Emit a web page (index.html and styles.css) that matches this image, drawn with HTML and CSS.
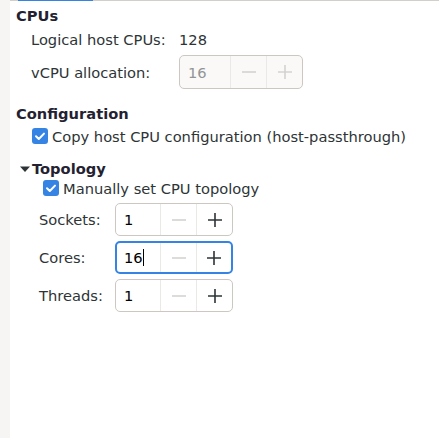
FILE: index.html
```html
<!DOCTYPE html>
<html>
<head>
<meta charset="utf-8">
<link rel="stylesheet" href="styles.css">
</head>
<body>
<div class="side"></div>
<div class="main">
  <div class="topline"><div class="indicator"></div></div>
  <div class="content">
    <div class="heading h-cpus">CPUs</div>
    <div class="grid cpu-grid">
      <div class="label">Logical host CPUs:</div>
      <div class="value">128</div>
      <div class="label">vCPU allocation:</div>
      <div class="spin disabled wide">
        <div class="entry">16</div>
        <div class="btn"><svg width="16" height="16" viewBox="0 0 16 16"><path d="M1 8h14" class="stroke"/></svg></div>
        <div class="btn"><svg width="16" height="16" viewBox="0 0 16 16"><path d="M1 8h14M8 1v14" class="stroke"/></svg></div>
      </div>
    </div>

    <div class="heading h-config">Configuration</div>
    <div class="check-row r-copy">
      <span class="checkbox"><svg width="16" height="16" viewBox="0 0 16 16"><path d="M4 8.2l2.8 2.8L12 5.6" fill="none" stroke="#fff" stroke-width="2" stroke-linecap="round" stroke-linejoin="round"/></svg></span>
      <span>Copy host CPU configuration (host-passthrough)</span>
    </div>

    <div class="heading h-topo"><svg class="arrow" width="12" height="8" viewBox="0 0 12 8"><path d="M1 1.5h10L6 7z" fill="#2e3436"/></svg>Topology</div>
    <div class="check-row r-manual">
      <span class="checkbox"><svg width="16" height="16" viewBox="0 0 16 16"><path d="M4 8.2l2.8 2.8L12 5.6" fill="none" stroke="#fff" stroke-width="2" stroke-linecap="round" stroke-linejoin="round"/></svg></span>
      <span>Manually set CPU topology</span>
    </div>
    <div class="grid topo-grid">
      <div class="label">Sockets:</div>
      <div class="spin">
        <div class="entry">1</div>
        <div class="btn dim"><svg width="16" height="16" viewBox="0 0 16 16"><path d="M1 8h14" class="stroke"/></svg></div>
        <div class="btn"><svg width="16" height="16" viewBox="0 0 16 16"><path d="M1 8h14M8 1v14" class="stroke"/></svg></div>
      </div>
      <div class="label">Cores:</div>
      <div class="spin focus">
        <div class="entry">16<span class="caret"></span></div>
        <div class="btn dim"><svg width="16" height="16" viewBox="0 0 16 16"><path d="M1 8h14" class="stroke"/></svg></div>
        <div class="btn"><svg width="16" height="16" viewBox="0 0 16 16"><path d="M1 8h14M8 1v14" class="stroke"/></svg></div>
      </div>
      <div class="label">Threads:</div>
      <div class="spin">
        <div class="entry">1</div>
        <div class="btn dim"><svg width="16" height="16" viewBox="0 0 16 16"><path d="M1 8h14" class="stroke"/></svg></div>
        <div class="btn"><svg width="16" height="16" viewBox="0 0 16 16"><path d="M1 8h14M8 1v14" class="stroke"/></svg></div>
      </div>
    </div>
  </div>
</div>
</body>
</html>
```
FILE: styles.css
```css
html, body {
  margin: 0;
  padding: 0;
  height: 100%;
}
body {
  display: flex;
  font-family: "DejaVu Sans", sans-serif;
  font-size: 14.67px;
  line-height: 17px;
  color: #2e3436;
  background: #ffffff;
}
.side {
  width: 10px;
  flex: none;
  background: #f6f5f4;
}
.main {
  flex: 1;
  background: #ffffff;
}
.topline {
  height: 1px;
  background: #d3cec9;
}
.indicator {
  margin-left: 8px;
  width: 75px;
  height: 1px;
  background: #3584e4;
}
.content {
  padding: 6px 0 0 6px;
}
.heading {
  font-weight: bold;
  color: #241f31;
  height: 17px;
  display: flex;
  align-items: center;
}
.h-config { margin-top: 16px; }
.h-topo { margin-top: 15px; }
.arrow {
  margin-left: 3px;
  margin-right: 1px;
}
.grid {
  display: grid;
  align-items: center;
}
.cpu-grid {
  margin-top: 7px;
  margin-left: 15px;
  grid-template-columns: 148px auto;
  grid-template-rows: 17px 34px;
  row-gap: 7px;
  justify-content: start;
}
.topo-grid {
  margin-top: 6px;
  margin-left: 23px;
  grid-template-columns: 76px auto;
  grid-auto-rows: 33px;
  row-gap: 5px;
  justify-content: start;
}
.value {
  color: #2e3436;
}
.check-row {
  display: flex;
  align-items: center;
  height: 18px;
  gap: 4px;
}
.r-copy { margin-top: 5px; margin-left: 16px; }
.r-manual { margin-top: 2px; margin-left: 27px; }
.checkbox {
  width: 16px;
  height: 16px;
  border-radius: 3px;
  background: #3584e4;
  display: block;
  flex: none;
}
.checkbox svg { display: block; }
.spin {
  display: flex;
  box-sizing: border-box;
  height: 33px;
  width: 118px;
  border: 1px solid #cdc7c2;
  border-radius: 5px;
  background: #ffffff;
  color: #000000;
}
.spin.wide {
  width: 124px;
  height: 34px;
}
.spin.disabled {
  background: #faf9f8;
  color: #929595;
}
.spin.focus {
  border: 2px solid #3584e4;
}
.entry {
  flex: 1;
  display: flex;
  align-items: center;
  padding-left: 8px;
}
.spin.focus .entry { padding-left: 7px; }
.caret {
  display: inline-block;
  width: 1px;
  height: 17px;
  background: #000;
}
.btn {
  width: 35px;
  flex: none;
  border-left: 1px solid #ebe9e7;
  display: flex;
  align-items: center;
  justify-content: center;
}
.spin.focus .btn:last-child { width: 34px; }
.stroke {
  stroke: #2e3436;
  stroke-width: 1.6;
  fill: none;
}
.btn.dim .stroke,
.spin.disabled .stroke {
  stroke: #d5d3d1;
}
```
